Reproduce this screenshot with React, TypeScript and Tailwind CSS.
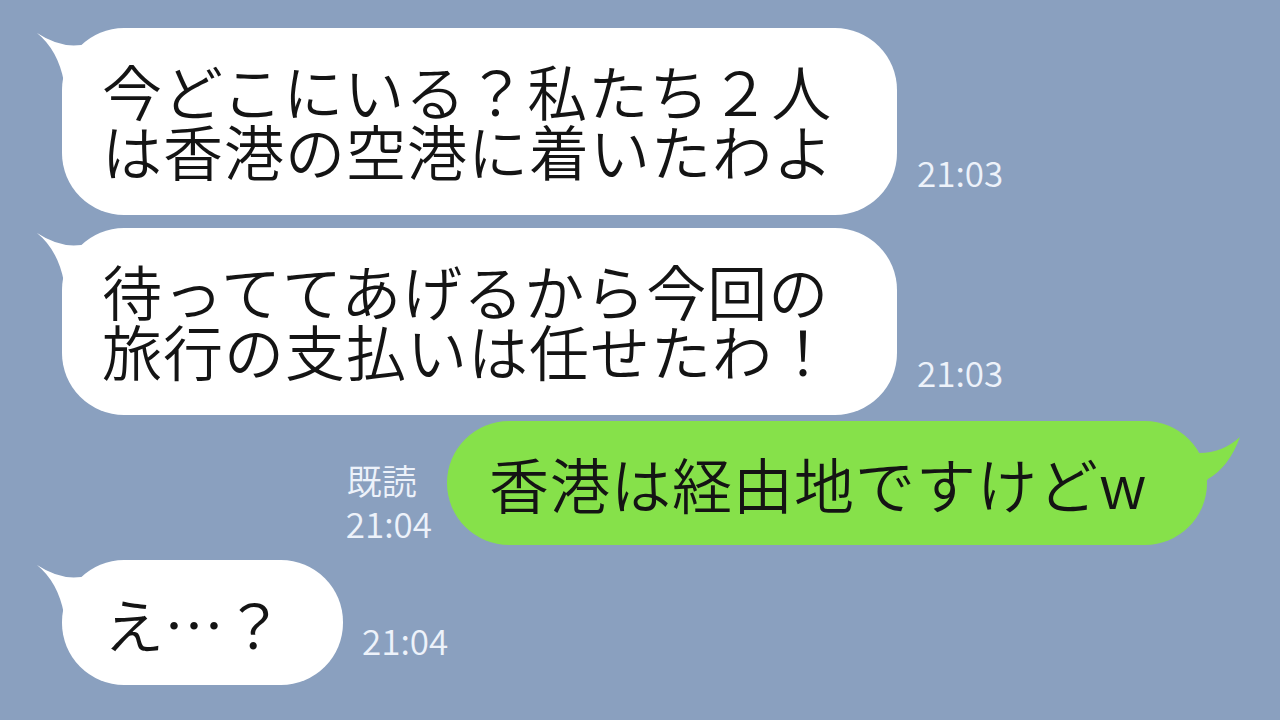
const jp = { fontFamily: '"Noto Sans CJK JP DemiLight", "Noto Sans CJK JP Light", "Noto Sans CJK JP", "Noto Sans", sans-serif' };

function LeftTail() {
  return (
    <svg className="absolute left-[-26px] top-0" width="70" height="70" viewBox="0 0 70 70">
      <path d="M1 5 Q 30 24 56 14 L 62 64 L 28 54 Q 22 22 1 5 Z" fill="#ffffff" />
    </svg>
  );
}

function RightTail() {
  return (
    <svg className="absolute right-[-40px] top-0" width="50" height="80" viewBox="0 0 50 80">
      <path d="M43 16 Q 24 33 0 32 L 0 74 L 11 58 Q 32 46 43 16 Z" fill="#86e14a" />
    </svg>
  );
}

function Time({ children, className = "" }: { children: React.ReactNode; className?: string }) {
  return (
    <div className={"text-[35px] leading-[40px] font-light text-[#edf2fa] " + className} style={jp}>
      {children}
    </div>
  );
}

export default function App() {
  return (
    <div className="w-[1280px] h-[720px] overflow-hidden bg-[#8aa0bf] flex flex-col pt-[28px]" style={jp}>
      <div className="flex items-end pl-[62px]">
        <div className="relative w-[835px] h-[187px] rounded-[62px] bg-white flex items-center pl-[40px]">
          <LeftTail />
          <p className="text-[60px] leading-[60px] tracking-[1px] font-light text-[#141414] -mt-[3px]">
            今どこにいる？私たち２人
            <br />
            は香港の空港に着いたわよ
          </p>
        </div>
        <Time className="ml-[20px] mb-[23px]">21:03</Time>
      </div>

      <div className="flex items-end pl-[62px] mt-[13px]">
        <div className="relative w-[835px] h-[187px] rounded-[62px] bg-white flex items-center pl-[40px]">
          <LeftTail />
          <p className="text-[60px] leading-[60px] tracking-[1px] font-light text-[#141414] -mt-[3px]">
            待っててあげるから今回の
            <br />
            旅行の支払いは任せたわ！
          </p>
        </div>
        <Time className="ml-[20px] mb-[23px]">21:03</Time>
      </div>

      <div className="flex items-end justify-end pr-[73px] mt-[6px]">
        <div className="mr-[15px] mb-[2px] flex flex-col">
          <Time className="text-[34px] leading-[46px] -ml-[2px]">既読</Time>
          <Time className="-ml-[3px]">21:04</Time>
        </div>
        <div className="relative w-[760px] h-[124px] rounded-[62px] bg-[#86e14a] flex items-center pl-[42px]">
          <RightTail />
          <p className="text-[60px] leading-[60px] tracking-[1px] font-light text-[#141414]">香港は経由地ですけどw</p>
        </div>
      </div>

      <div className="flex items-end pl-[62px] mt-[15px]">
        <div className="relative w-[281px] h-[125px] rounded-[62px] bg-white flex items-center pl-[42px]">
          <LeftTail />
          <p className="text-[60px] leading-[60px] font-light text-[#141414]">え…？</p>
        </div>
        <Time className="ml-[19px] mb-[25px]">21:04</Time>
      </div>
    </div>
  );
}
